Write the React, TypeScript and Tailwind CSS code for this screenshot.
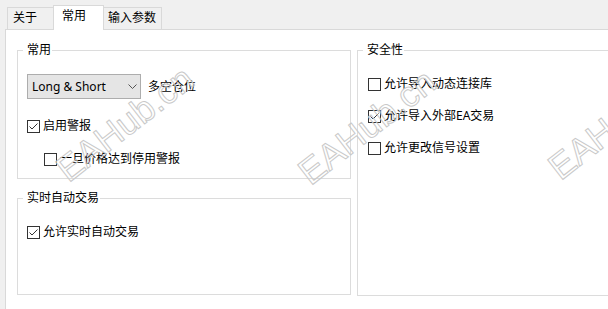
import React from "react";

function Box({ checked }: { checked: boolean }) {
  return (
    <span className="w-[13px] h-[13px] border border-[#333333] bg-white flex items-center justify-center shrink-0">
      {checked && (
        <svg width="11" height="11" viewBox="0 0 11 11">
          <polyline points="1.5,5.5 4,8 9.5,2.5" fill="none" stroke="#333333" strokeWidth="1" />
        </svg>
      )}
    </span>
  );
}

function Row({ checked, label, className = "" }: { checked: boolean; label: string; className?: string }) {
  return (
    <div className={"flex items-center h-[16px] gap-[3px] " + className}>
      <Box checked={checked} />
      <span className="leading-[16px]">{label}</span>
    </div>
  );
}

function Watermark({ className }: { className: string }) {
  return (
    <div
      className={
        "absolute -translate-x-1/2 -translate-y-1/2 -rotate-[38deg] whitespace-nowrap pointer-events-none text-[36px] leading-none font-[Liberation_Sans,Arial,sans-serif] text-transparent [-webkit-text-stroke:1px_#c9c9c9] " +
        className
      }
    >
      EAHub.cn
    </div>
  );
}

export default function App() {
  return (
    <div className="relative w-[608px] h-[309px] overflow-hidden bg-[#f0f0f0] flex flex-col text-[12px] text-black font-[Noto_Sans,Noto_Sans_CJK_SC,sans-serif]">
      <div className="flex items-end h-[29px] pl-[7px] shrink-0">
        <div className="w-[47px] h-[22px] border border-b-0 border-[#d9d9d9] pl-[5px] pt-[2px] leading-[16px]">关于</div>
        <div className="relative z-10 -ml-px -mb-px w-[51px] h-[25px] border border-b-0 border-[#d9d9d9] bg-white pl-[8px] pt-[2px] leading-[16px]">常用</div>
        <div className="-ml-px w-[59px] h-[22px] border border-b-0 border-[#d9d9d9] pl-[4px] pt-[2px] leading-[16px]">输入参数</div>
      </div>
      <div className="flex-1 ml-[5px] border-l border-t border-[#d9d9d9] bg-white flex gap-[6px] pl-[11px] pt-[12px]">
        <div className="flex flex-col">
          <fieldset className="border border-[#dcdcdc] w-[334px] h-[137px] p-0 m-0">
            <legend className="ml-[5px] pl-[4px] pr-[1px] leading-[16px]">常用</legend>
            <div className="pl-[9px] pt-[16px] flex flex-col">
              <div className="flex items-center gap-[7px]">
                <div className="w-[114px] h-[25px] border border-[#adadad] bg-[#e5e5e5] flex items-center justify-between pl-[4px] pr-[3px]">
                  <span className="leading-[16px]">Long &amp; Short</span>
                  <svg width="9" height="5" viewBox="0 0 9 5">
                    <polyline points="0.5,0.5 4.5,4.5 8.5,0.5" fill="none" stroke="#555555" strokeWidth="1" />
                  </svg>
                </div>
                <span className="leading-[16px]">多空仓位</span>
              </div>
              <Row checked={true} label="启用警报" className="mt-[19px]" />
              <Row checked={false} label="一旦价格达到停用警报" className="mt-[17px] ml-[17px]" />
            </div>
          </fieldset>
          <fieldset className="mt-[11px] border border-[#dcdcdc] w-[334px] h-[105px] p-0 m-0">
            <legend className="ml-[5px] pl-[4px] pr-[1px] leading-[16px]">实时自动交易</legend>
            <div className="pl-[9px] pt-[18px] flex flex-col">
              <Row checked={true} label="允许实时自动交易" />
            </div>
          </fieldset>
        </div>
        <fieldset className="border border-[#dcdcdc] w-[300px] h-[254px] p-0 m-0 shrink-0">
          <legend className="ml-[5px] pl-[4px] pr-[1px] leading-[16px]">安全性</legend>
          <div className="pl-[10px] pt-[18px] flex flex-col gap-[16px]">
            <Row checked={false} label="允许导入动态连接库" />
            <Row checked={true} label="允许导入外部EA交易" />
            <Row checked={false} label="允许更改信号设置" />
          </div>
        </fieldset>
      </div>
      <Watermark className="left-[125px] top-[124px]" />
      <Watermark className="left-[367px] top-[127px]" />
      <Watermark className="left-[617px] top-[122px]" />
    </div>
  );
}
